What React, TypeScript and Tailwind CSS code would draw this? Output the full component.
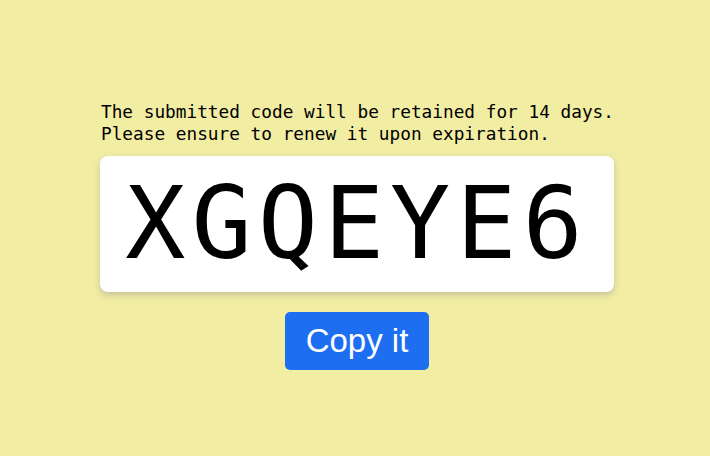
const App = () => {
  const code = "XGQEYE6";

  return (
    <div className="min-h-screen w-full bg-[#f1eda3] flex flex-col items-center pt-[101px]">
      <div className="ml-[4px] w-[514px] flex flex-col items-center">
        <p className="w-full pl-[1px] text-[17.75px] leading-[22px] text-black font-['DejaVu_Sans_Mono',monospace] whitespace-pre">
          {"The submitted code will be retained for 14 days.\nPlease ensure to renew it upon expiration."}
        </p>
        <div className="mt-[11px] w-full h-[136px] bg-white rounded-lg shadow-[0_3px_6px_rgba(120,120,150,0.35)] flex items-center justify-center">
          <span className="text-[100px] leading-none tracking-[6px] text-black font-['DejaVu_Sans_Mono',monospace]">
            {code}
          </span>
        </div>
        <button className="mt-[20px] w-[144px] h-[58px] rounded-[5px] bg-[#1d6ef0] text-white text-[33px] font-['Liberation_Sans',Arial,sans-serif]">
          Copy it
        </button>
      </div>
    </div>
  );
};

export default App;
